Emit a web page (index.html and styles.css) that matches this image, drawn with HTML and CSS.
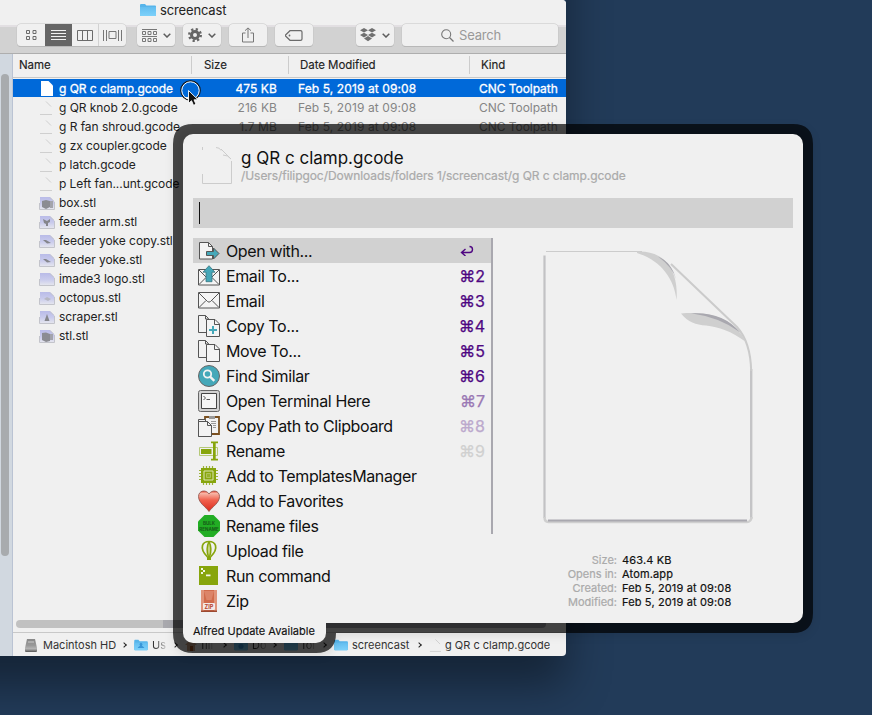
FILE: index.html
```html
<!DOCTYPE html>
<html lang="en">
<head>
<meta charset="utf-8">
<title>screencast</title>
<link rel="stylesheet" href="styles.css">
</head>
<body>
<svg class="defs" aria-hidden="true">
  <defs>
    <linearGradient id="gf" x1="0" y1="0" x2="0" y2="1"><stop offset="0" stop-color="#62bdf0"/><stop offset="1" stop-color="#7dd1fa"/></linearGradient>
    <linearGradient id="gs" x1="0" y1="0" x2="0" y2="1"><stop offset="0" stop-color="#b9bbe8"/><stop offset=".55" stop-color="#c9cbec"/><stop offset="1" stop-color="#e4e5ee"/></linearGradient>
    <linearGradient id="gh" x1="0" y1="0" x2="0" y2="1"><stop offset="0" stop-color="#e8432f"/><stop offset=".12" stop-color="#f7b5a5"/><stop offset=".45" stop-color="#f0604c"/><stop offset="1" stop-color="#d92a1c"/></linearGradient>
    <linearGradient id="gd" x1="0" y1="0" x2="0" y2="1"><stop offset="0" stop-color="#888"/><stop offset=".5" stop-color="#999"/><stop offset=".75" stop-color="#b5b5b5"/><stop offset="1" stop-color="#555"/></linearGradient>
    <symbol id="folder" viewBox="0 0 16 14"><path d="M0 2.2Q0 1 1 1h4l1.4 1.5H15q1 0 1 1V12q0 1-1 1H1q-1 0-1-1z" fill="#56b4ea"/><path d="M0 4h16v8q0 1-1 1H1q-1 0-1-1z" fill="url(#gf)"/></symbol>
    <symbol id="doc" viewBox="0 0 13 15"><path d="M1 14.500h12M7 1.500l5 5" fill="none" stroke="#cfcfcf" stroke-width="1"/></symbol>
    <symbol id="mesh" viewBox="0 0 16 14"><path d="M1 1h10l4 4v8H1z" fill="url(#gs)"/><path d="M.5 7v6.500h15V6M11 1.500l4 4" fill="none" stroke="#c3c4cb"/></symbol>
    <symbol id="chev" viewBox="0 0 8 5"><path d="M.7.7L4 4 7.3.7" fill="none" stroke="#5d5d5d" stroke-width="1.5"/></symbol>
    <symbol id="pages" viewBox="0 0 22 22"><path d="M.5.5h7l3 3v14H.5z" fill="#f2f2f2" stroke="#555"/><path d="M7.5.5v3.5h3" fill="none" stroke="#555"/><path d="M8.500 4.500h8.500l4.500 4.500v12.500h-13z" fill="#f4f4f4" stroke="#555"/><path d="M16.500 4.500v5h5" fill="none" stroke="#555"/></symbol>
    <symbol id="mail" viewBox="0 0 22 17"><path d="M.5.5h21v15.500H.5z" fill="#f5f5f5" stroke="#555"/><path d="M1 1l8.500 8.500q1.500 1.300 3 0L21 1M1 15.500l7-7M21 15.500l-7-7" fill="none" stroke="#555"/></symbol>
  </defs>
</svg>

<main class="desktop">
  <section class="finder">
    <header class="finder-top">
      <div class="title"><svg width="16" height="14"><use href="#folder"/></svg><span>screencast</span></div>
      <div class="toolbar">
        <div class="btn views">
          <span class="v1"><svg width="11" height="10" viewBox="0 0 11 10"><path d="M.5.5h3v3h-3zM7 .5h3v3H7zM.5 6.500h3v3h-3zM7 6.500h3v3H7z" fill="none" stroke="#6b6b6b"/></svg></span>
          <span class="v2"><svg width="15" height="11" viewBox="0 0 15 11"><path d="M0 .5h15M0 3.500h15M0 6.500h15M0 9.500h15" stroke="#f2f2f2"/></svg></span>
          <span class="v3"><svg width="16" height="11" viewBox="0 0 16 11"><path d="M.5.5h15v10H.5zM5.500.5v10M10.500.5v10" fill="none" stroke="#6b6b6b"/></svg></span>
          <span class="v4"><svg width="19" height="11" viewBox="0 0 19 11"><path d="M.5 0v11M3.500 0v11M15.500 0v11M18.500 0v11M6 1.500h7v7H6z" fill="none" stroke="#777"/></svg></span>
        </div>
        <div class="btn drop b-group"><svg width="15" height="13" viewBox="0 0 15 13"><path d="M.5 2.500h3v3h-3zM6 2.500h3v3H6zM11.500 2.500h3v3h-3zM.5 9.500h3v3h-3zM6 9.500h3v3H6zM11.500 9.500h3v3h-3zM0 .5h15M0 7.500h15" fill="none" stroke="#777"/></svg><svg width="8" height="5"><use href="#chev"/></svg></div>
        <div class="btn drop b-gear"><svg width="14" height="14" viewBox="0 0 14 14"><circle cx="7" cy="7" r="3.500" fill="none" stroke="#666" stroke-width="3"/><circle cx="7" cy="7" r="5.800" fill="none" stroke="#666" stroke-width="2.400" stroke-dasharray="2.200 2.355"/></svg><svg width="8" height="5"><use href="#chev"/></svg></div>
        <div class="btn b-share"><svg width="12" height="16" viewBox="0 0 12 16"><path d="M3.500 6H.5v9h11V6h-3M6 11V1M3 3.700L6 .9l3 2.800" fill="none" stroke="#777"/></svg></div>
        <div class="btn b-tag"><svg width="18" height="11" viewBox="0 0 18 11"><path d="M5 .7h10.500q1.500 0 1.500 1.300v7q0 1.300-1.500 1.300H5L.8 6.300q-.8-.8 0-1.600z" fill="none" stroke="#6b6b6b" stroke-width="1.200"/><circle cx="4.500" cy="5.500" r=".9" fill="#6b6b6b"/></svg></div>
        <div class="btn drop b-box"><svg width="16" height="14" viewBox="0 0 16 14"><path d="M4 0l4 2.300-4 2.300-4-2.300zM12 0l4 2.300-4 2.300-4-2.300zM4 4.800l4 2.300-4 2.300-4-2.300zM12 4.800l4 2.300-4 2.300-4-2.300zM4 10.500l4-2.400 4 2.400-4 2.700z" fill="#707070"/></svg><svg width="8" height="5"><use href="#chev"/></svg></div>
        <div class="btn search"><svg width="13" height="13" viewBox="0 0 13 13"><circle cx="5.200" cy="5.200" r="4.500" fill="none" stroke="#777" stroke-width="1.100"/><path d="M8.500 8.500l4 4" stroke="#777" stroke-width="1.300"/></svg><span>Search</span></div>
      </div>
    </header>
    <div class="finder-mid">
      <aside class="side"><div class="side-thumb"></div></aside>
      <div class="files">
        <div class="cols"><span class="c-name">Name</span><span class="c-size">Size</span><span class="c-date">Date Modified</span><span class="c-kind">Kind</span></div>
        <div class="rows">
          <div class="row sel"><span class="ico"><svg width="12" height="15" viewBox="0 0 12 15"><path d="M0 0h7.500L12 4.500V15H0z" fill="#fff"/></svg></span><span class="nm">g QR c clamp.gcode</span><span class="sz">475 KB</span><span class="dt">Feb 5, 2019 at 09:08</span><span class="kd">CNC Toolpath</span></div>
          <div class="row"><span class="ico"><svg width="13" height="15"><use href="#doc"/></svg></span><span class="nm">g QR knob 2.0.gcode</span><span class="sz">216 KB</span><span class="dt">Feb 5, 2019 at 09:08</span><span class="kd">CNC Toolpath</span></div>
          <div class="row"><span class="ico"><svg width="13" height="15"><use href="#doc"/></svg></span><span class="nm">g R fan shroud.gcode</span><span class="sz">1.7 MB</span><span class="dt">Feb 5, 2019 at 09:08</span><span class="kd">CNC Toolpath</span></div>
          <div class="row"><span class="ico"><svg width="13" height="15"><use href="#doc"/></svg></span><span class="nm">g zx coupler.gcode</span></div>
          <div class="row"><span class="ico"><svg width="13" height="15"><use href="#doc"/></svg></span><span class="nm">p latch.gcode</span></div>
          <div class="row"><span class="ico"><svg width="13" height="15"><use href="#doc"/></svg></span><span class="nm">p Left fan...unt.gcode</span></div>
          <div class="row"><span class="ico"><svg width="16" height="14" viewBox="0 0 16 14"><use href="#mesh"/><path d="M3 5l4-1 4 1v6l-4 2-4-2z" fill="#8b8c92"/><path d="M11 5h3v7h-3z" fill="#a3a4ac"/></svg></span><span class="nm">box.stl</span></div>
          <div class="row"><span class="ico"><svg width="16" height="14" viewBox="0 0 16 14"><use href="#mesh"/><path d="M4 4l4 2 3-2v3l-2 1v3H7V9L5 8z" fill="#85868c"/></svg></span><span class="nm">feeder arm.stl</span></div>
          <div class="row"><span class="ico"><svg width="16" height="14" viewBox="0 0 16 14"><use href="#mesh"/><path d="M4 6l3 0 5 3-4 .5z" fill="#85868c"/></svg></span><span class="nm">feeder yoke copy.stl</span></div>
          <div class="row"><span class="ico"><svg width="16" height="14" viewBox="0 0 16 14"><use href="#mesh"/><path d="M4 6l3 0 5 3-4 .5z" fill="#85868c"/></svg></span><span class="nm">feeder yoke.stl</span></div>
          <div class="row"><span class="ico"><svg width="16" height="14"><use href="#mesh"/></svg></span><span class="nm">imade3 logo.stl</span></div>
          <div class="row"><span class="ico"><svg width="16" height="14" viewBox="0 0 16 14"><use href="#mesh"/><path d="M5 8l3-2 4 2-3 2z" fill="#b6b7c2"/></svg></span><span class="nm">octopus.stl</span></div>
          <div class="row"><span class="ico"><svg width="16" height="14" viewBox="0 0 16 14"><use href="#mesh"/><path d="M8 4l2.500 7h-5z" fill="#85868c"/></svg></span><span class="nm">scraper.stl</span></div>
          <div class="row"><span class="ico"><svg width="16" height="14" viewBox="0 0 16 14"><use href="#mesh"/><path d="M3 4l4-.5 4 1.500v7l-4 1-4-2z" fill="#8b8c92"/><path d="M11 5h3v6h-3z" fill="#a3a4ac"/></svg></span><span class="nm">stl.stl</span></div>
        </div>
        <div class="hscroll"><div class="hthumb"></div></div>
        <footer class="path">
          <span class="crumb p1"><svg width="12" height="13" viewBox="0 0 12 13"><path d="M2 0h8l2 9v3q0 1-1 1H1q-1 0-1-1V9z" fill="url(#gd)"/><path d="M3 3h6" stroke="#ccc"/></svg>Macintosh HD</span><i></i>
          <span class="crumb p2"><svg width="14" height="12" viewBox="0 0 16 14"><use href="#folder"/><path d="M8 4.500a2 2 0 0 1 1 3.500q2 1 3 2.500H4Q5 9 7 8a2 2 0 0 1 1-3.500" fill="#3896d8"/></svg><b>Us</b></span><i></i>
          <span class="crumb p3"><svg width="12" height="12" viewBox="0 0 12 12"><path d="M6 0l6 6H0zM2 6h8v6H2z" fill="#c9a184"/><path d="M5 7h3v5H5z" fill="#a65321"/></svg><b>fili</b></span><i></i>
          <span class="crumb p4"><svg width="14" height="12" viewBox="0 0 16 14"><use href="#folder"/><circle cx="8" cy="8.500" r="3" fill="#3896d8"/></svg><b>Do</b></span><i></i>
          <span class="crumb p5"><svg width="14" height="12"><use href="#folder"/></svg><b>fol</b></span><i></i>
          <span class="crumb p6"><svg width="14" height="12"><use href="#folder"/></svg>screencast</span><i></i>
          <span class="crumb p7"><svg width="12" height="14"><use href="#doc"/></svg>g QR c clamp.gcode</span>
        </footer>
      </div>
    </div>
  </section>

  <section class="alfred">
    <svg class="ring" width="640" height="529" viewBox="0 0 640 529"><path d="M20 0H620Q640 0 640 20V489Q640 509 620 509H163Q163 529 143 529H20Q0 529 0 509V20Q0 0 20 0z" fill="#000" fill-opacity=".7"/></svg>
    <div class="panel">
      <header class="target">
        <svg width="32" height="38" viewBox="0 0 32 38"><path d="M1.500 0v3M1.500 27v9.500h29V14M15 .5q4 0 5 3M20 2l9 9M22 8q5 0 8 4" fill="none" stroke="#ccc"/></svg>
        <div><h1>g QR c clamp.gcode</h1><p>/Users/filipgoc/Downloads/folders 1/screencast/g QR c clamp.gcode</p></div>
      </header>
      <div class="input"><span class="caret"></span></div>
      <div class="body">
        <ul class="actions">
          <li class="on"><svg width="22" height="22" viewBox="0 0 22 22"><path d="M1.500 2.500h9l4 4v12.500h-13z" fill="#f3f3f3" stroke="#555"/><path d="M10.500 2.500v4h4" fill="none" stroke="#555"/><path d="M8.500 11.500h7V8l5.500 5.500-5.500 5.500v-3.500h-7z" fill="#45a8b9" stroke="#555"/></svg><span>Open with...</span><kbd><svg width="14" height="11" viewBox="0 0 14 11"><path d="M5.500 4L1.500 7.500 5.500 11M2 7.500h7.500q3 0 3-3t-3-3" fill="none" stroke="#4f0782" stroke-width="1.400"/></svg></kbd></li>
          <li><svg width="22" height="22" viewBox="0 0 22 22"><svg y="4" width="22" height="17"><use href="#mail"/></svg><path d="M11 .7l6 6.500h-3v9.500h-6V7.200H5z" fill="#45a8b9" stroke="#397580" stroke-width=".8"/></svg><span>Email To...</span><kbd>⌘2</kbd></li>
          <li><svg width="22" height="17"><use href="#mail"/></svg><span>Email</span><kbd>⌘3</kbd></li>
          <li><svg width="22" height="22" viewBox="0 0 22 22"><use href="#pages"/><path d="M15 11v8M11 15h8" stroke="#45a8b9" stroke-width="2"/></svg><span>Copy To...</span><kbd>⌘4</kbd></li>
          <li><svg width="22" height="22"><use href="#pages"/></svg><span>Move To...</span><kbd>⌘5</kbd></li>
          <li><svg width="22" height="22" viewBox="0 0 22 22"><circle cx="11" cy="11" r="10.500" fill="#45a8b9" stroke="#666"/><circle cx="9.500" cy="9" r="3.700" fill="none" stroke="#f2f2f2" stroke-width="1.800"/><path d="M12.300 11.800l4 4" stroke="#f2f2f2" stroke-width="2.400"/></svg><span>Find Similar</span><kbd>⌘6</kbd></li>
          <li><svg width="22" height="22" viewBox="0 0 22 22"><rect x=".5" y=".5" width="21" height="21" rx="2" fill="#d2d2d2" stroke="#666"/><path d="M3.500 3.500h15v15h-15z" fill="#f5f5f5" stroke="#444"/><path d="M5.500 6l2 2-2 2M8.500 9.500h3.500" fill="none" stroke="#555"/></svg><span>Open Terminal Here</span><kbd class="k7">⌘7</kbd></li>
          <li><svg width="22" height="22" viewBox="0 0 22 22"><path d="M7 2h14v17H7z" fill="#f3f3f3" stroke="#7a5020" stroke-width="1.800"/><path d="M11 1h6v3h-6z" fill="#999"/><path d="M13 6.500h5M13 8.500h5M15 10.500h3M15 12.500h3" stroke="#999"/><path d="M.5 4.500h7v17h-7z" fill="#f3f3f3" stroke="#555"/><path d="M.5 6.500h9l4 4V21.500H.5z" fill="#f3f3f3" stroke="#555"/><path d="M9.500 6.500v4h4" fill="none" stroke="#555"/></svg><span>Copy Path to Clipboard</span><kbd class="k8">⌘8</kbd></li>
          <li><svg width="22" height="22" viewBox="0 0 22 22"><path d="M1.500 7.500h18v8h-18z" fill="#f0f0f0" stroke="#b5c877"/><path d="M3 9h10.500v5H3zM13 1.500h7v1.800h-2.300v15.400H20v1.800h-7v-1.800h2V3.300h-2z" fill="#87a50c"/></svg><span>Rename</span><kbd class="k9">⌘9</kbd></li>
          <li><svg width="22" height="22" viewBox="0 0 22 22"><path d="M5.500 1v19M8.500 1v19M11.500 1v19M14.500 1v19M1 5.500h19M1 8.500h19M1 11.500h19M1 14.500h19" stroke="#9bb23a" stroke-width="1.200"/><path d="M3 3h15v15H3z" fill="#87a50c"/><path d="M6 6h9v9H6z" fill="#87a50c" stroke="#dce6b4"/><path d="M8.500 8.500h4v4h-4z" fill="#97b12a" stroke="#aec25a"/></svg><span>Add to TemplatesManager</span></li>
          <li><svg width="22" height="22" viewBox="0 0 22 22"><path d="M11 4C8-1 .5.500.5 6.500.5 13 8 17 11 21.500 14 17 21.500 13 21.500 6.500 21.500.5 14-1 11 4z" fill="url(#gh)" stroke="#8b5149" stroke-width=".8"/></svg><span>Add to Favorites</span></li>
          <li><svg width="22" height="22" viewBox="0 0 22 22"><path d="M6.500 0h9L22 6.500v9L15.500 22h-9L0 15.500v-9z" fill="#22ad24"/><text x="11" y="10.200" class="tiny-dark">BULK</text><text x="11" y="16" class="tiny-dark">RENAME</text></svg><span>Rename files</span></li>
          <li><svg width="22" height="22" viewBox="0 0 22 22"><path d="M9.500 17C5.500 13 3.500 9 4.500 5.500 5.300 3 8 1.500 11 1.500s5.700 1.500 6.500 4c1 3.500-1 7.500-5 11.500" fill="none" stroke="#87a50c" stroke-width="1.700"/><path d="M11 1.500q-3.500 7-.5 15.500h1q3-8.500-.5-15.500" fill="#c3d27c" stroke="#87a50c" stroke-width="1.500"/><path d="M9 17h4v3H9z" fill="#87a50c"/></svg><span>Upload file</span></li>
          <li><svg width="22" height="22" viewBox="0 0 22 22"><path d="M1 1h19v19H1z" fill="#87a50c"/><path d="M3 3h2v2h2v2H5v2H3V7h2V5H3zM8 9.500h4.500v1.800H8z" fill="#f3f5e6"/></svg><span>Run command</span></li>
          <li><svg width="22" height="22" viewBox="0 0 22 22"><path d="M3 0h16v22H3z" fill="#d06b4b"/><path d="M3 0h3v22H3zM16 0h3v22h-3z" fill="#e0947a"/><path d="M6 1h10l-2.500 9h-5z" fill="#dc8468"/><path d="M3 20.500h16V22H3z" fill="#9c4a31"/><rect x="5" y="13" width="12" height="7" rx="1" fill="#f3eae6"/><text x="11" y="18.700" class="tiny-red">ZIP</text></svg><span>Zip</span></li>
        </ul>
        <div class="vbar"></div>
        <div class="preview">
          <svg width="210" height="274" viewBox="0 0 210 274">
            <path d="M1.500 5.500V268" stroke="#c2c2c4" stroke-width="2.200" fill="none"/>
            <path d="M3 1.500h96" stroke="#ccc"/>
            <path d="M208.200 119V269" stroke="#c4c4c6" stroke-width="2.400"/>
            <path d="M1.500 267q0 5 4 5H204q4 0 4.500-5" fill="none" stroke="#cfcfcf" stroke-width="2.500"/>
            <path d="M5 270.500H204" stroke="#a9a8af" stroke-width="2"/>
            <path d="M128 14L194 77Q207.500 92 208.200 121" fill="none" stroke="#cbcbcb" stroke-width="2"/>
            <path d="M94 1.500C121 0 136 20 133.500 50C131 28 117 10 94 3z" fill="#cfcfcf"/>
            <path d="M115 6.500q14 6 18 23-3-12-18-23" fill="#a9a8af"/>
            <path d="M138 63.500C170 61 192 70 203 92C188 81 176 77 163 75.500C153 75 145 72 138 63.500z" fill="#cfcfcf"/>
            <path d="M148 63.300q32-2 49 19-20-15-49-19" fill="#a9a8af"/>
          </svg>
          <dl><dt>Size:</dt><dd>463.4 KB</dd><dt>Opens in:</dt><dd>Atom.app</dd><dt>Created:</dt><dd>Feb 5, 2019 at 09:08</dd><dt>Modified:</dt><dd>Feb 5, 2019 at 09:08</dd></dl>
        </div>
      </div>
    </div>
    <div class="update">Alfred Update Available</div>
  </section>

  <svg class="pointer" width="24" height="28" viewBox="0 0 24 28"><circle cx="10.500" cy="10.500" r="9.700" fill="none" stroke="#111" stroke-width="1.200"/><circle cx="10.500" cy="10.500" r="8.700" fill="none" stroke="#fff" stroke-width="1"/><path d="M8.500 10.500v13l3-2.800 2 4.600 2.500-1-2-4.500h4z" fill="#111" stroke="#fff" stroke-width=".9"/></svg>
</main>
</body>
</html>
```

FILE: styles.css
```css
* { box-sizing: border-box; margin: 0; padding: 0; }
body { font-family: Inter, "Liberation Sans", sans-serif; font-size: 12px; color: #222; }
svg { display: block; flex: none; }
.defs { position: absolute; width: 0; height: 0; }
.desktop { position: relative; width: 872px; height: 715px; overflow: hidden; background: #223b59; }

.desktop::before { content: ""; position: absolute; left: -60px; top: -80px; width: 626px; height: 736px; border-radius: 5px; box-shadow: 0 30px 44px rgba(0, 0, 0, .38); }
.finder { position: relative; display: flex; flex-direction: column; width: 566px; height: 656px; overflow: hidden; background: #f0f0f0; border-radius: 0 4px 4px 0; }
.finder-top { height: 54px; flex: none; border-bottom: 1px solid #aeaeae; background: linear-gradient(#f0f0f0 25px, #e2dfe2 25px, #e2dfe2 27px, #d2d2d2 27px); }
.title { display: flex; gap: 4px; align-items: center; height: 20px; padding: 0 0 0 140px; font-size: 13px; letter-spacing: -.15px; }
.toolbar { display: flex; margin-top: 4px; padding-left: 17px; }
.btn { display: flex; align-items: center; justify-content: center; width: 38px; height: 22px; border-radius: 4px; background: #f0f0f0; box-shadow: 0 0 0 .5px #c4c4c4, 0 1px 0 #adadad; margin-right: 8px; }
.views { width: 109px; margin-right: 11px; justify-content: flex-start; overflow: hidden; }
.views span { display: flex; height: 22px; align-items: center; justify-content: center; }
.v1 { width: 28px; }
.v2 { width: 27px; background: #666; }
.v3 { width: 27px; border-right: 1px solid #d2d2d2; }
.v4 { width: 27px; }
.drop { gap: 6px; }
.b-tag { margin-right: 43px; }
.search { width: 156px; gap: 5px; margin: 0; padding-right: 18px; color: #999; font-size: 13px; letter-spacing: -.2px; }

.finder-mid { display: flex; flex: 1; min-height: 0; }
.side { width: 13px; flex: none; background: #d1d8e0; border-right: 1px solid #bac3d3; padding: 20px 0 0 1px; }
.side-thumb { width: 8px; height: 482px; border-radius: 4px; background: #a8abae; }
.files { display: flex; flex-direction: column; flex: 1; min-width: 0; }
.cols { display: flex; align-items: center; height: 24px; padding-bottom: 1px; border-bottom: 1px solid #c8c8c8; font-size: 11.500px; letter-spacing: -.05px; -webkit-text-stroke: .15px #222; }
.cols span { height: 18px; line-height: 18px; border-left: 1px solid #ccc; padding-left: 12px; }
.cols .c-name { width: 178px; border: 0; padding-left: 6px; }
.c-size { width: 97px; }
.cols .c-date { width: 181px; padding-left: 11px; }
.cols .c-kind { padding-left: 11px; }
.rows { flex: 1; padding-top: 1px; }
.row { display: flex; align-items: center; height: 19px; white-space: nowrap; letter-spacing: -.05px; }
.row > span { flex: none; }
.row.sel { height: 18px; margin-bottom: 1px; background: #0069d9; color: #fff; -webkit-text-stroke: .3px #fff; }
.ico { width: 46px; padding-left: 26px; }
.sel .ico { padding-left: 28px; }
.nm { width: 130px; }
.sz { width: 88px; text-align: right; letter-spacing: .1px; }
.dt { width: 181px; padding-left: 21px; letter-spacing: .1px; }
.kd { padding-left: 21px; }
.row:not(.sel) .sz, .row:not(.sel) .dt, .row:not(.sel) .kd { color: #858585; }
.hscroll { height: 12px; padding-left: 3px; }
.hthumb { width: 530px; height: 8px; border-radius: 4px; background: linear-gradient(90deg, #c1c1c1 147px, #a9a9ae 147px); }
.path { display: flex; align-items: center; height: 24px; padding: 1px 0 0 12px; border-top: 1px solid #c8c8c8; font-size: 11px; white-space: nowrap; color: #333; }
.crumb { display: flex; align-items: center; gap: 4px; flex: none; overflow: hidden; }
.crumb b { font-weight: 400; -webkit-mask-image: linear-gradient(90deg, #000 20%, transparent 120%); }
.path i { width: 4px; height: 4px; margin: 0 8px 0 4px; border: solid #222; border-width: 1.500px 1.500px 0 0; transform: rotate(45deg); flex: none; }
.p1 { width: 93px; gap: 6px; }
.p2 { width: 35px; }
.p3 { width: 33px; }
.p4 { width: 34px; }
.p5 { width: 34px; }
.p6 { width: 79px; }

.alfred { position: absolute; left: 183px; top: 134px; width: 620px; }
.ring { position: absolute; left: -10px; top: -10px; overflow: visible; filter: drop-shadow(0 3px 4px rgba(0, 0, 0, .12)); }
.panel { position: relative; height: 489px; padding: 10px; background: #f0f0f0; border-radius: 10px 10px 10px 0; }
.target { display: flex; height: 54px; padding: 3px 0 0 8px; gap: 8px; }
.target h1 { font-size: 17px; line-height: 22px; font-weight: 400; color: #111; letter-spacing: 0; }
.target p { font-size: 12px; line-height: 14px; color: #aaa; white-space: nowrap; letter-spacing: -.07px; -webkit-text-stroke: .2px #aaa; }
.input { height: 30px; background: #d1d1d1; padding: 4px 6px; }
.caret { display: block; width: 1px; height: 22px; background: #111; }
.body { display: flex; margin-top: 10px; }
.actions { width: 298px; list-style: none; }
.actions li { display: flex; align-items: center; height: 25px; padding: 0 6px 0 5px; gap: 6px; font-size: 16px; letter-spacing: -.38px; color: #111; }
.actions .on { background: #d1d1d1; }
kbd { font: inherit; color: #4f0782; margin-left: auto; letter-spacing: 0; -webkit-text-stroke: .25px currentColor; }
.on kbd { padding-right: 11px; }
.k7 { color: #9a78b4; }
.k8 { color: #bca9cd; }
.k9 { color: #d0d0d0; }
.tiny-dark { font-size: 4.500px; font-weight: 700; text-anchor: middle; fill: #155c17; letter-spacing: 0; }
.tiny-red { font-size: 5.500px; font-weight: 700; text-anchor: middle; fill: #b5412b; letter-spacing: 0; }
.vbar { width: 2px; height: 296px; background: #a9a8af; }
.preview { padding: 12px 0 0 50px; }
.preview dl { display: grid; grid-template-columns: 74px auto; column-gap: 5px; grid-auto-rows: 14px; margin-top: 29px; font-size: 11px; line-height: 14px; }
.preview dt { text-align: right; color: #aaa; -webkit-text-stroke: .2px #aaa; }
.preview dd { color: #111; letter-spacing: .14px; -webkit-text-stroke: .2px #111; }
.update { position: relative; width: 143px; height: 20px; padding-left: 10px; line-height: 16px; font-size: 11px; color: #111; background: #f0f0f0; border-radius: 0 0 10px 10px; white-space: nowrap; -webkit-text-stroke: .15px #111; }
.pointer { position: absolute; left: 180px; top: 80px; }
```
